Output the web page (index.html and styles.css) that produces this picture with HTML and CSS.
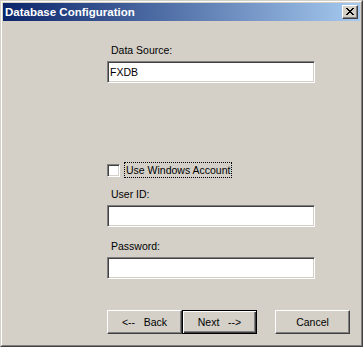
FILE: index.html
```html
<!DOCTYPE html>
<html>
  <head>
    <meta charset="UTF-8" />
    <title>Database Configuration</title>
    <link rel="stylesheet" href="styles.css">
  </head>

  <body>
    <div class="window">
      <div class="frame">
        <div class="title-bar">
          <span class="title">Database Configuration</span>
          <button class="close-btn" type="button">
            <svg width="8" height="7" viewBox="0 0 8 7">
              <path d="M0 0h2v1h1v1h2V1h1V0h2v1H7v1H6v1H5v1h1v1h1v1h1v1H6V6H5V5H3v1H2v1H0V6h1V5h1V4h1V3H2V2H1V1H0z" fill="#000" />
            </svg>
          </button>
        </div>

        <div class="content">
          <label class="field-label" for="source">Data Source:</label>
          <input class="field" type="text" id="source" value="FXDB" />

          <div class="check-row">
            <span class="check-box"></span>
            <span class="check-label">Use Windows Account</span>
          </div>

          <label class="field-label user-label" for="user">User ID:</label>
          <input class="field" type="text" id="user" />

          <label class="field-label pwd-label" for="pwd">Password:</label>
          <input class="field" type="password" id="pwd" />

          <div class="buttons">
            <button class="btn" type="button">&lt;--&nbsp;&nbsp;&nbsp;Back</button>
            <button class="btn btn-default" type="button">Next&nbsp;&nbsp;&nbsp;--&gt;</button>
            <button class="btn btn-cancel" type="button">Cancel</button>
          </div>
        </div>
      </div>
    </div>
  </body>
</html>
```

FILE: styles.css
```css
* {
  box-sizing: border-box;
}

body {
  margin: 0;
  font-family: Tahoma, "Liberation Sans", sans-serif;
  font-size: 10.5px;
  background-color: #d4d0c8;
}

.window {
  width: 363px;
  height: 347px;
  border: 1px solid;
  border-color: #d4d0c8 #404040 #404040 #d4d0c8;
  background-color: #d4d0c8;
}

.frame {
  height: 100%;
  border: 1px solid;
  border-color: #fff #808080 #808080 #fff;
  padding: 1px;
  display: flex;
  flex-direction: column;
}

.title-bar {
  height: 18px;
  display: flex;
  align-items: center;
  justify-content: space-between;
  padding: 0 2px 0 2px;
  background: linear-gradient(to right, #0a246a, #a6caf0);
}

.title {
  color: #fff;
  font-weight: bold;
  font-size: 11.5px;
  font-family: "Liberation Sans", sans-serif;
}

.close-btn {
  width: 16px;
  height: 14px;
  padding: 0;
  display: flex;
  align-items: center;
  justify-content: center;
  background-color: #d4d0c8;
  border: 1px solid;
  border-color: #fff #404040 #404040 #fff;
  box-shadow: inset -1px -1px 0 #808080;
}

.close-btn svg {
  display: block;
  margin-left: -1px;
  margin-top: -1px;
}

.content {
  display: flex;
  flex-direction: column;
  margin-left: 104px;
  width: 244px;
  padding-top: 23px;
}

.field-label {
  height: 13px;
  line-height: 13px;
  margin-bottom: 4px;
  margin-left: 4px;
  color: #000;
}

.field {
  width: 208px;
  height: 22px;
  border: 1px solid;
  border-color: #808080 #fff #fff #808080;
  box-shadow: inset 1px 1px 0 #404040, inset -1px -1px 0 #d4d0c8;
  background-color: #fff;
  outline: none;
  padding: 0 2px;
  font-family: Tahoma, "Liberation Sans", sans-serif;
  font-size: 10.5px;
  color: #000;
}

.check-row {
  display: flex;
  align-items: center;
  height: 16px;
  margin-top: 79px;
}

.check-box {
  width: 13px;
  height: 13px;
  border: 1px solid;
  border-color: #808080 #fff #fff #808080;
  box-shadow: inset 1px 1px 0 #404040, inset -1px -1px 0 #d4d0c8;
  background-color: #fff;
}

.check-label {
  margin-left: 4px;
  padding: 0 1px;
  line-height: 14px;
  border: 1px dotted #000;
}

.user-label {
  margin-top: 10px;
}

.pwd-label {
  margin-top: 13px;
}

.buttons {
  display: flex;
  margin-top: 31px;
}

.btn {
  width: 75px;
  height: 24px;
  padding: 0;
  background-color: #d4d0c8;
  border: 1px solid;
  border-color: #fff #404040 #404040 #fff;
  box-shadow: inset -1px -1px 0 #808080;
  font-family: Tahoma, "Liberation Sans", sans-serif;
  font-size: 10.5px;
  color: #000;
}

.btn-default {
  border: 1px solid #000;
  box-shadow: inset 1px 1px 0 #fff, inset -1px -1px 0 #404040, inset -2px -2px 0 #808080;
}

.btn-cancel {
  margin-left: 18px;
}
```
